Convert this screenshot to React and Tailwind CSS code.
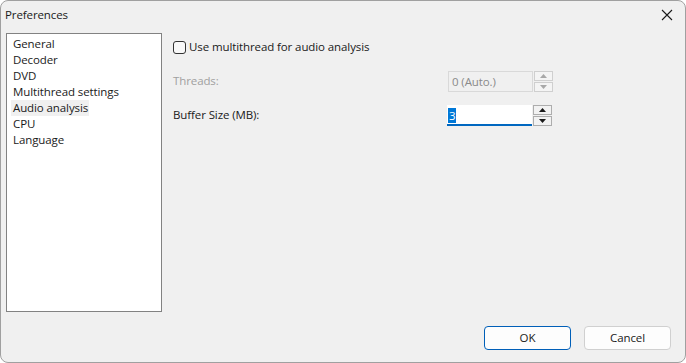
import React from 'react';

const items = ['General', 'Decoder', 'DVD', 'Multithread settings', 'Audio analysis', 'CPU', 'Language'];

const CloseIcon = () => (
    <svg width="12" height="12" viewBox="0 0 12 12" fill="none">
        <path d="M1 1L11 11M11 1L1 11" stroke="#1a1a1a" strokeWidth="1.1" />
    </svg>
);

const Arrow = ({ up, color }) => (
    <svg width="7" height="4" viewBox="0 0 7 4">
        <path d={up ? 'M0 4L3.5 0L7 4Z' : 'M0 0L7 0L3.5 4Z'} fill={color} />
    </svg>
);

const Spinner = ({ disabled }) => {
    const btn = disabled
        ? 'border-[#cfcfcf] bg-[#f4f4f4]'
        : 'border-[#adadad] bg-[#f2f2f2]';
    const color = disabled ? '#a8a8a8' : '#1a1a1a';
    return (
        <div className="flex flex-col gap-[1px] ml-[1px] w-[19px] h-[21px]">
            <div className={`flex-1 flex items-center justify-center border ${btn}`}>
                <Arrow up color={color} />
            </div>
            <div className={`flex-1 flex items-center justify-center border ${btn}`}>
                <Arrow color={color} />
            </div>
        </div>
    );
};

export default function App() {
    return (
        <div
            className="w-[686px] h-[363px] bg-[#f0f0f0] border border-[#a0a0a0] rounded-[8px] overflow-hidden flex flex-col text-[11.5px] tracking-[-0.1px] text-[#1a1a1a]"
            style={{ fontFamily: '"Open Sans", "Noto Sans", sans-serif' }}
        >
            {/* Title bar */}
            <div className="h-[31px] flex items-center justify-between pl-[4px] pr-[12px] shrink-0">
                <span className="mt-[-4px]">Preferences</span>
                <span className="mt-[-4px]"><CloseIcon /></span>
            </div>

            <div className="flex flex-1 pl-[5px]">
                {/* Category list */}
                <div className="w-[156px] h-[279px] mt-[1px] bg-white border border-[#828282] pt-[2px] px-[4px]">
                    {items.map((item) => (
                        <div
                            key={item}
                            className={`h-[16px] leading-[16px] px-[2px] ${item === 'Audio analysis' ? 'bg-[#f0f0f0] w-fit pr-[1px]' : ''}`}
                        >
                            {item}
                        </div>
                    ))}
                </div>

                {/* Options */}
                <div className="flex flex-col ml-[11px] pt-[6px]">
                    <label className="flex items-center h-[18px]">
                        <span className="w-[13px] h-[13px] border border-[#333] rounded-[3px] bg-[#f8f8f8]" />
                        <span className="ml-[3px]">Use multithread for audio analysis</span>
                    </label>

                    <div className="flex items-center h-[21px] mt-[15px]">
                        <span className="w-[275px] text-[#a0a0a0] mt-[-2px]">Threads:</span>
                        <div className="w-[85px] h-[21px] border border-[#d9d9d9] bg-[#f0f0f0] text-[#8a8a8a] px-[3px] leading-[19px]">
                            0 (Auto.)
                        </div>
                        <Spinner disabled />
                    </div>

                    <div className="flex items-start h-[21px] mt-[13px]">
                        <span className="w-[274px] leading-[16px] mt-[2px]">Buffer Size (MB):</span>
                        <div className="w-[85px] h-[21px] bg-white border-b-2 border-[#0067c0] pl-[1px] pt-[2px]">
                            <span className="bg-[#0078d7] text-white leading-[15px] inline-block px-[1px]">3</span>
                        </div>
                        <Spinner />
                    </div>
                </div>
            </div>

            {/* Buttons */}
            <div className="flex justify-end gap-[13px] pr-[14px] pb-[12px] shrink-0">
                <button className="w-[87px] h-[24px] rounded-[4px] border border-[#005fb8] bg-[#fdfdfd] shadow-[inset_0_0_0_1px_#fdfdfd]">
                    OK
                </button>
                <button className="w-[87px] h-[24px] rounded-[4px] border border-[#d0d0d0] bg-[#fdfdfd]">
                    Cancel
                </button>
            </div>
        </div>
    );
}
